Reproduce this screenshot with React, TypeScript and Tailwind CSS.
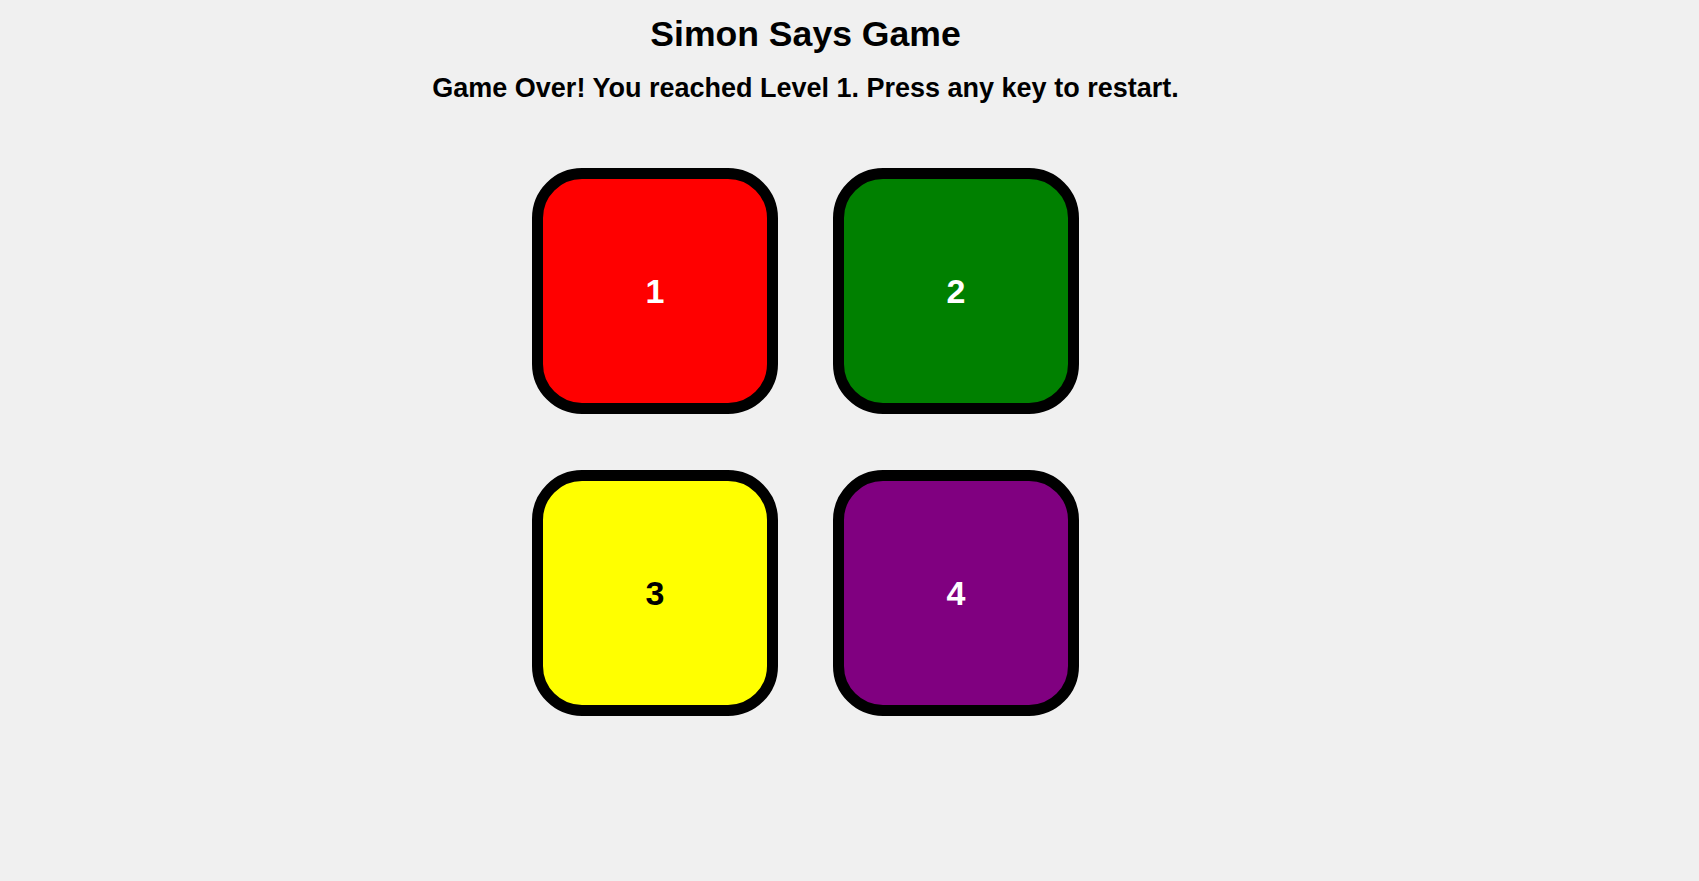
import React from 'react';

const pads = [
    { id: 1, bg: 'bg-[#ff0000]', text: 'text-white' },
    { id: 2, bg: 'bg-[#008000]', text: 'text-white' },
    { id: 3, bg: 'bg-[#ffff00]', text: 'text-black' },
    { id: 4, bg: 'bg-[#800080]', text: 'text-white' },
];

const App: React.FC = () => {
    return (
        <div className="min-h-screen w-full bg-[#f0f0f0] font-['Liberation_Sans',Arial,sans-serif] text-black">
            <div className="flex w-[1611px] flex-col items-center text-center">
                <h1 className="mt-[14px] text-[35.6px] font-bold leading-[41px]">
                    Simon Says Game
                </h1>
                <h2 className="mt-[18px] text-[27px] font-bold leading-[31px]">
                    Game Over! You reached Level 1. Press any key to restart.
                </h2>

                {/* game pads */}
                <div className="mt-[64px] grid grid-cols-[246px_246px] gap-x-[55px] gap-y-[56px]">
                    {pads.map((pad) => (
                        <button
                            key={pad.id}
                            className={`flex h-[246px] w-[246px] items-center justify-center rounded-[50px] border-[11px] border-black ${pad.bg} ${pad.text} text-[34px] font-bold`}
                        >
                            {pad.id}
                        </button>
                    ))}
                </div>
            </div>
        </div>
    );
};

export default App;
